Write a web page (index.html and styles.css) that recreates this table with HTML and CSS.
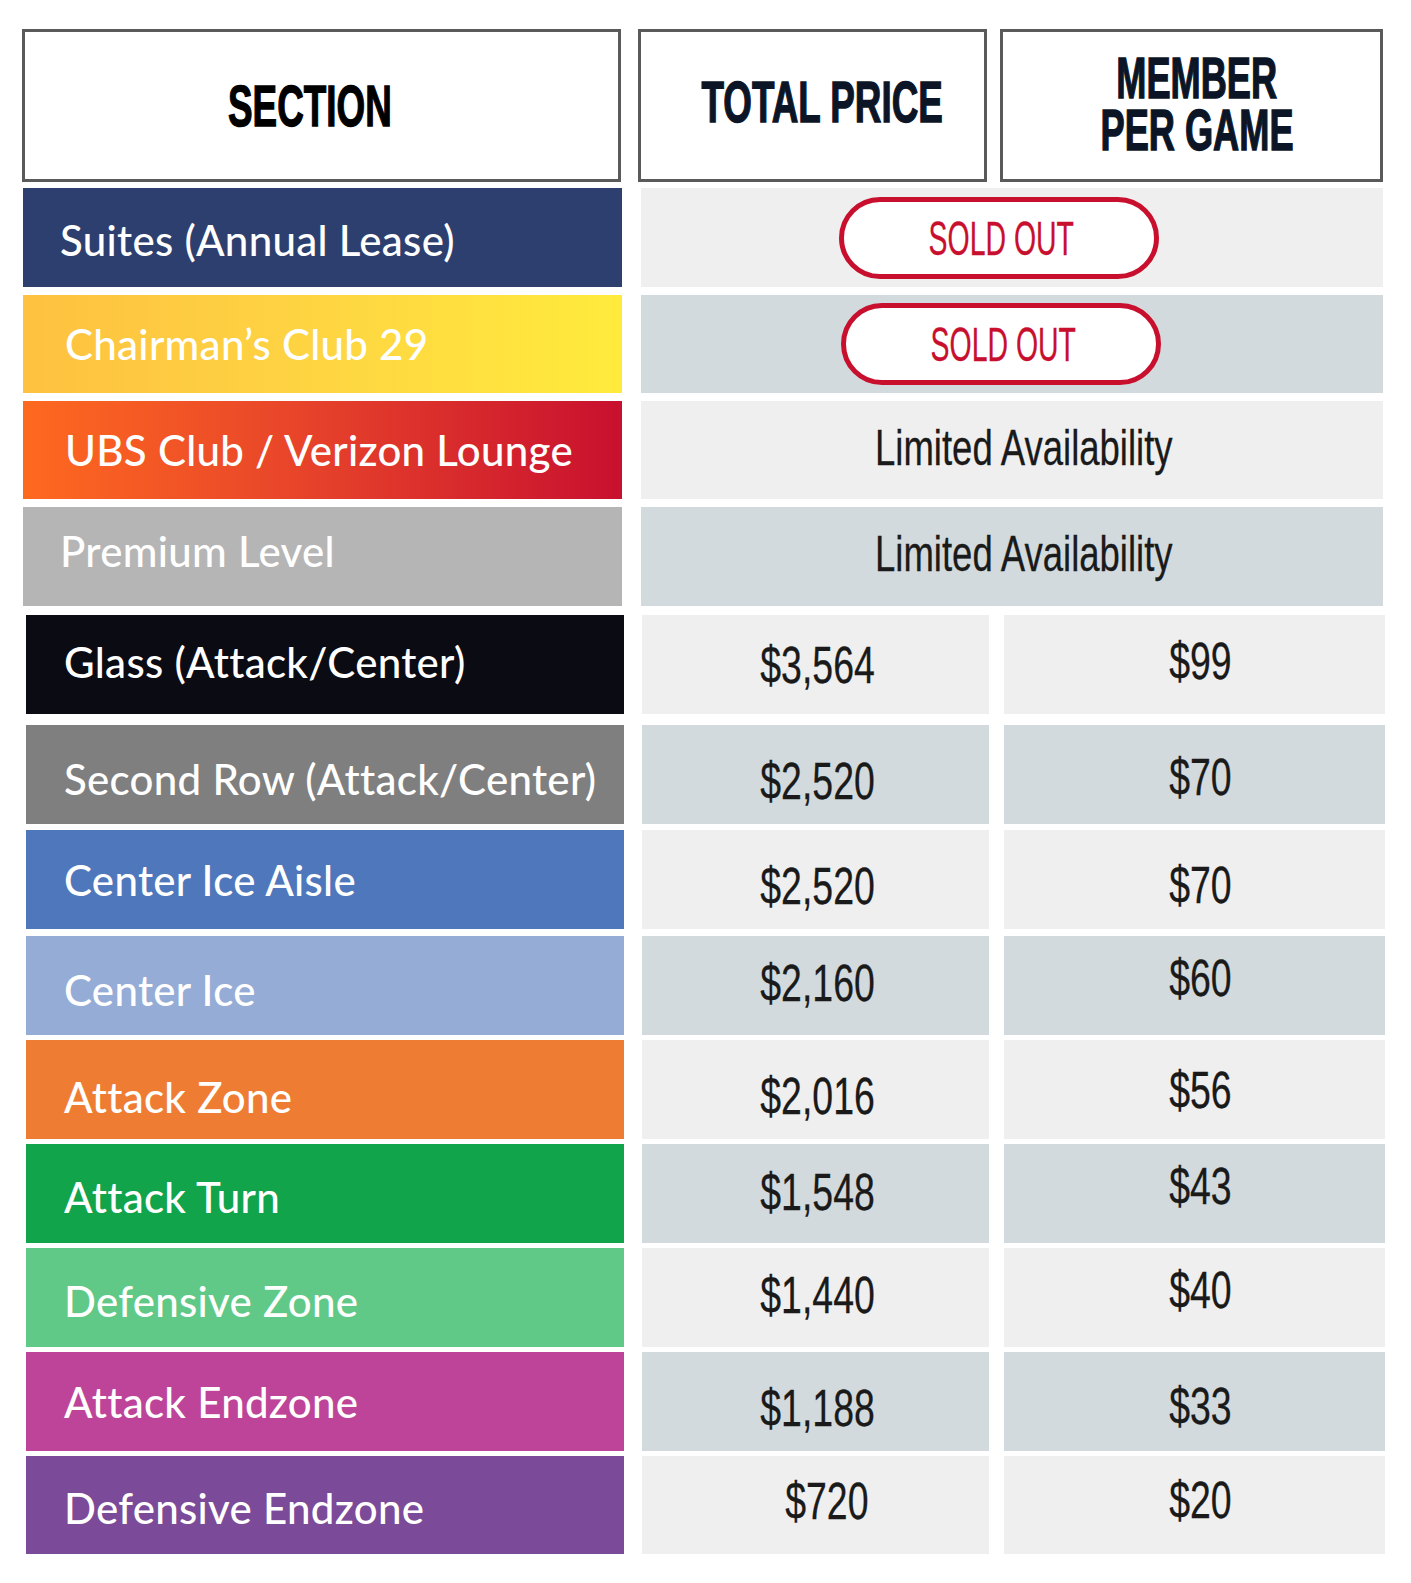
FILE: index.html
```html
<!DOCTYPE html>
<html lang="en">
<head>
<meta charset="utf-8">
<title>Seat Pricing</title>
<link rel="stylesheet" href="styles.css">
</head>
<body>
<div class="sheet">
  <div class="head">
    <div class="hbox h-sec"><span class="htxt black">SECTION</span></div>
    <div class="hbox h-price"><span class="htxt">TOTAL PRICE</span></div>
    <div class="hbox h-member">
      <div class="hstack">
        <span class="htxt line">MEMBER</span>
        <span class="htxt line">PER GAME</span>
      </div>
    </div>
  </div>

  <div class="row a first">
    <div class="label suites d2">Suites (Annual Lease)</div>
    <div class="span light"><span class="pill"><span class="pill-txt">SOLD OUT</span></span></div>
  </div>
  <div class="row a">
    <div class="label chair ind">Chairman’s Club 29</div>
    <div class="span blue"><span class="pill second-pill"><span class="pill-txt">SOLD OUT</span></span></div>
  </div>
  <div class="row a">
    <div class="label ubs ind">UBS Club / Verizon Lounge</div>
    <div class="span light"><span class="num wide u2">Limited Availability</span></div>
  </div>
  <div class="row a last">
    <div class="label premium u6">Premium Level</div>
    <div class="span blue"><span class="num wide u3">Limited Availability</span></div>
  </div>

  <div class="row b g9">
    <div class="label glass u3">Glass (Attack/Center)</div>
    <div class="cell price light"><span class="num">$3,564</span></div>
    <div class="cell member light"><span class="num u4">$99</span></div>
  </div>
  <div class="row b g11">
    <div class="label second d4">Second Row (Attack/Center)</div>
    <div class="cell price blue"><span class="num d6">$2,520</span></div>
    <div class="cell member blue"><span class="num d2">$70</span></div>
  </div>
  <div class="row b g6">
    <div class="label aisle">Center Ice Aisle</div>
    <div class="cell price light"><span class="num d6">$2,520</span></div>
    <div class="cell member light"><span class="num d5">$70</span></div>
  </div>
  <div class="row b g7">
    <div class="label center d4">Center Ice</div>
    <div class="cell price blue"><span class="num u3">$2,160</span></div>
    <div class="cell member blue"><span class="num u8">$60</span></div>
  </div>
  <div class="row b">
    <div class="label azone d7">Attack Zone</div>
    <div class="cell price light"><span class="num d6">$2,016</span></div>
    <div class="cell member light"><span class="num">$56</span></div>
  </div>
  <div class="row b">
    <div class="label aturn d3">Attack Turn</div>
    <div class="cell price blue"><span class="num u2">$1,548</span></div>
    <div class="cell member blue"><span class="num u8">$43</span></div>
  </div>
  <div class="row b">
    <div class="label dzone d3">Defensive Zone</div>
    <div class="cell price light"><span class="num u3">$1,440</span></div>
    <div class="cell member light"><span class="num u8">$40</span></div>
  </div>
  <div class="row b">
    <div class="label aend">Attack Endzone</div>
    <div class="cell price blue"><span class="num d6">$1,188</span></div>
    <div class="cell member blue"><span class="num d4">$33</span></div>
  </div>
  <div class="row b short">
    <div class="label dend d3">Defensive Endzone</div>
    <div class="cell price light shift"><span class="num u4">$720</span></div>
    <div class="cell member light"><span class="num u5">$20</span></div>
  </div>
</div>
</body>
</html>
```

FILE: styles.css
```css
html, body {
  margin: 0;
  padding: 0;
  background: #ffffff;
}

body {
  width: 1411px;
  height: 1583px;
  overflow: hidden;
}

.sheet {
  padding-top: 29px;
}

/* ---------- header ---------- */
.head {
  display: flex;
  padding-left: 22px;
  height: 153px;
}

.hbox {
  box-sizing: border-box;
  height: 153px;
  border: 3px solid #5a5a5a;
  background: #fff;
  display: flex;
  align-items: center;
  justify-content: center;
}

.h-sec {
  width: 599px;
  padding-right: 24px;
}

.h-price {
  width: 349px;
  margin-left: 17px;
  padding-left: 19px;
  padding-bottom: 8px;
}

.h-member {
  width: 383px;
  margin-left: 13px;
  padding-left: 11px;
  padding-bottom: 4px;
}

.hstack {
  display: flex;
  flex-direction: column;
  align-items: center;
  gap: 2px;
}

.htxt {
  display: inline-block;
  font-family: "Liberation Sans", Arial, sans-serif;
  font-weight: 700;
  font-size: 58px;
  line-height: 52px;
  color: #0b1526;
  text-align: center;
  white-space: nowrap;
  transform: scaleX(0.635);
  -webkit-text-stroke: 1.4px currentColor;
}

.htxt.line {
  display: block;
  height: 50px;
  line-height: 50px;
  font-size: 57px;
}

.htxt.black {
  color: #000;
}

/* ---------- rows ---------- */
.row {
  display: flex;
  height: 99px;
  margin-top: 5px;
}

.row.a {
  padding-left: 23px;
  height: 98px;
  margin-top: 8px;
}

.row.a.first {
  margin-top: 6px;
  height: 99px;
}

.row.a.last {
  height: 99px;
}

.row.b {
  padding-left: 26px;
}

.row.g9 { margin-top: 9px; }
.row.g11 { margin-top: 11px; }
.row.g6 { margin-top: 6px; }
.row.g7 { margin-top: 7px; }
.row.short { height: 98px; }

/* ---------- section labels ---------- */
.label {
  box-sizing: border-box;
  width: 598px;
  display: flex;
  align-items: center;
  padding-left: 38px;
  color: #ffffff;
  font-family: "Lato", "Open Sans", sans-serif;
  font-weight: 500;
  font-size: 42px;
  letter-spacing: 0.3px;
  white-space: nowrap;
}

.row.a .label {
  width: 599px;
  padding-left: 37px;
}

.row.a .label.ind {
  padding-left: 42px;
}

.suites  { background: #2d3f6f; }
.chair   { background: linear-gradient(90deg, #fec140 0%, #fed342 45%, #ffeb3c 100%); }
.ubs     { background: linear-gradient(90deg, #fe691f 0%, #e8452a 45%, #c8102f 100%); }
.premium { background: #b5b5b5; }
.glass   { background: #0b0b14; }
.second  { background: #7f7f7f; }
.aisle   { background: #4f77bc; }
.center  { background: #94acd6; }
.azone   { background: #ee7d33; }
.aturn   { background: #11a44b; }
.dzone   { background: #60c987; }
.aend    { background: #be4499; }
.dend    { background: #7b4a98; }

/* ---------- value cells ---------- */
.light { background: #efefef; }
.blue  { background: #d2dadd; }

.span {
  box-sizing: border-box;
  width: 742px;
  margin-left: 19px;
  display: flex;
  align-items: center;
  justify-content: center;
}

.cell {
  box-sizing: border-box;
  display: flex;
  align-items: center;
  justify-content: center;
}

.cell.price {
  width: 347px;
  margin-left: 18px;
  padding-left: 4px;
}

.cell.price.shift {
  padding-left: 22px;
}

.cell.member {
  width: 381px;
  margin-left: 15px;
  padding-left: 12px;
}

.num {
  display: inline-block;
  font-family: "Liberation Sans", Arial, sans-serif;
  font-size: 52px;
  line-height: 60px;
  color: #1a1a1a;
  white-space: nowrap;
  transform: scaleX(0.72);
  -webkit-text-stroke: 0.3px currentColor;
}

.num.wide {
  font-size: 50px;
  transform: scaleX(0.73);
  margin-left: 24px;
}

.pill {
  box-sizing: border-box;
  width: 320px;
  height: 82px;
  margin-right: 26px;
  border: 5px solid #c8102e;
  border-radius: 41px;
  background: #ffffff;
  display: flex;
  align-items: center;
  justify-content: center;
  padding-left: 4px;
}

.pill.second-pill {
  margin-right: 22px;
}

.pill-txt {
  display: inline-block;
  font-family: "Liberation Sans", Arial, sans-serif;
  font-size: 49px;
  line-height: 56px;
  color: #c8102e;
  white-space: nowrap;
  transform: scaleX(0.58);
  -webkit-text-stroke: 0.3px currentColor;
}

/* vertical nudges */
.d2 { padding-top: 4px; }
.d3 { padding-top: 6px; }
.d4 { padding-top: 8px; }
.d5 { padding-top: 10px; }
.d6 { padding-top: 12px; }
.d7 { padding-top: 14px; }
.u2 { padding-bottom: 4px; }
.u3 { padding-bottom: 6px; }
.u4 { padding-bottom: 8px; }
.u5 { padding-bottom: 10px; }
.u6 { padding-bottom: 12px; }
.u8 { padding-bottom: 16px; }
```
